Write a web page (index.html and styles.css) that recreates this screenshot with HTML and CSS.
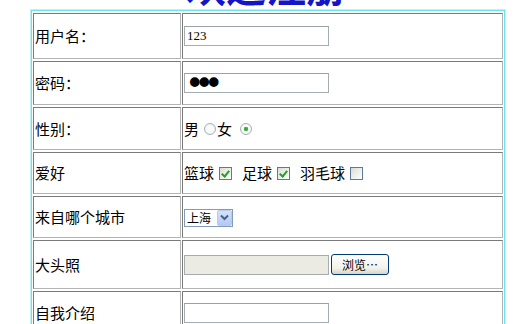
FILE: index.html
```html
<!DOCTYPE html>
<html lang="zh">
<head>
<meta charset="utf-8">
<title>欢迎注册</title>
<link rel="stylesheet" href="styles.css">
</head>
<body>
<h1 class="title">欢迎注册</h1>
<form class="reg">
<table class="regtable">
  <tr class="r1">
    <td class="lbl">用户名：</td>
    <td class="val"><input class="txt" type="text" value="123"></td>
  </tr>
  <tr class="r2">
    <td class="lbl">密码：</td>
    <td class="val"><input class="txt pwd" type="password" value="123"></td>
  </tr>
  <tr class="r3">
    <td class="lbl">性别：</td>
    <td class="val"><div class="choices"><span>男</span><input class="radio" type="radio" name="sex"><span>女</span><input class="radio radio-2" type="radio" name="sex" checked></div></td>
  </tr>
  <tr class="r4">
    <td class="lbl">爱好</td>
    <td class="val"><div class="choices"><span>篮球</span><input class="chk" type="checkbox" checked><span>足球</span><input class="chk" type="checkbox" checked><span>羽毛球</span><input class="chk" type="checkbox"></div></td>
  </tr>
  <tr class="r5">
    <td class="lbl">来自哪个城市</td>
    <td class="val"><span class="sel"><select class="city"><option>上海</option><option>北京</option></select><span class="sel-btn"><svg width="9" height="7" viewBox="0 0 9 7"><path d="M1 1.5 L4.5 5 L8 1.5" fill="none" stroke="#4d6185" stroke-width="2"/></svg></span></span></td>
  </tr>
  <tr class="r6">
    <td class="lbl">大头照</td>
    <td class="val"><div class="filerow"><input class="filepath" type="text" readonly><button class="browse" type="button">浏览…</button></div></td>
  </tr>
  <tr class="r7">
    <td class="lbl">自我介绍</td>
    <td class="val"><input class="txt" type="text"></td>
  </tr>
</table>
</form>
</body>
</html>
```

FILE: styles.css
```css
html, body {
  margin: 0;
  padding: 0;
  background: #ffffff;
}
body {
  font-family: "Noto Sans CJK SC", "Noto Sans", sans-serif;
  font-size: 15px;
  color: #000;
  overflow: hidden;
}
.title {
  margin: -35px 0 5px;
  text-align: center;
  font-size: 40px;
  line-height: 40px;
  font-weight: bold;
  color: #1414c8;
}
.reg {
  margin: 0;
}
.regtable {
  margin-left: 31px;
  width: 474px;
  border: 1px solid #6fe3ea;
  border-spacing: 1px 2px;
  box-shadow: 0 0 0 1px #bdf3f6;
}
.regtable td {
  box-sizing: border-box;
  padding: 1px;
  border: 1px solid;
  border-color: #7a7a7a #b4b4b4 #b4b4b4 #7a7a7a;
  vertical-align: middle;
  line-height: 18px;
}
.lbl {
  width: 148px;
}
.r1 td { height: 46px; }
.r2 td { height: 44px; }
.r3 td { height: 43px; }
.r4 td { height: 42px; }
.r5 td { height: 42px; }
.r6 td { height: 49px; }
.r7 td { height: 44px; }

.txt {
  display: block;
  box-sizing: border-box;
  width: 145px;
  height: 20px;
  margin: 0;
  padding: 0 2px;
  border: 1px solid #a5acb2;
  border-top-color: #9aa1a8;
  font-family: "Liberation Serif", serif;
  font-size: 13px;
  color: #000;
  background: #fff;
  outline: none;
}
.pwd {
  font-family: "DejaVu Sans", sans-serif;
  font-size: 33px;
  letter-spacing: -10px;
  padding: 0;
  line-height: 18px;
}
.choices {
  display: flex;
  align-items: center;
}
.radio {
  appearance: none;
  -webkit-appearance: none;
  box-sizing: border-box;
  width: 12px;
  height: 12px;
  margin: 0 1px 0 5px;
  border: 1px solid #a3afbd;
  border-radius: 50%;
  background: radial-gradient(circle, #ffffff 0, #f0f0ec 100%);
}
.radio-2 {
  margin-left: 8px;
}
.radio:checked {
  background: radial-gradient(circle, #2e9a2e 0, #4cb84c 2px, #ffffff 2.6px, #eeeeea 100%);
}
.chk {
  appearance: none;
  -webkit-appearance: none;
  position: relative;
  box-sizing: border-box;
  width: 13px;
  height: 13px;
  margin: 0 10px 0 5px;
  border: 1px solid #5d7a98;
  background: linear-gradient(135deg, #dcdcd6, #ffffff);
}
.chk:checked::after {
  content: "";
  position: absolute;
  left: 3px;
  top: 1px;
  width: 3px;
  height: 6px;
  border: solid #21a121;
  border-width: 0 2px 2px 0;
  transform: rotate(40deg);
}
.sel {
  display: inline-flex;
  align-items: center;
  box-sizing: border-box;
  height: 18px;
  width: 49px;
  border: 1px solid #7f9db9;
  background: #fff;
  vertical-align: middle;
}
.city {
  appearance: none;
  -webkit-appearance: none;
  flex: 1;
  min-width: 0;
  height: 16px;
  margin: 0;
  padding: 0 2px;
  border: none;
  background: transparent;
  font-family: "Noto Sans CJK SC", sans-serif;
  font-size: 12px;
  line-height: 16px;
  color: #000;
}
.sel-btn {
  display: flex;
  align-items: center;
  justify-content: center;
  box-sizing: border-box;
  width: 15px;
  height: 16px;
  border: 1px solid #b9c9ef;
  background: linear-gradient(#d6e2fb, #b4c8f6);
  border-radius: 2px;
}
.filerow {
  display: flex;
  align-items: center;
}
.filepath {
  box-sizing: border-box;
  width: 145px;
  height: 20px;
  margin: 0;
  border: 1px solid #a5acb2;
  background: #ebebe4;
  outline: none;
}
.browse {
  box-sizing: border-box;
  width: 58px;
  height: 21px;
  margin: 0 0 0 2px;
  padding: 0;
  border: 1px solid #003c74;
  border-radius: 3px;
  background: linear-gradient(#ffffff, #f2f1ea 70%, #d8d5c5);
  font-family: "Noto Sans CJK SC", sans-serif;
  font-size: 12px;
  line-height: 18px;
  color: #000;
}
```
